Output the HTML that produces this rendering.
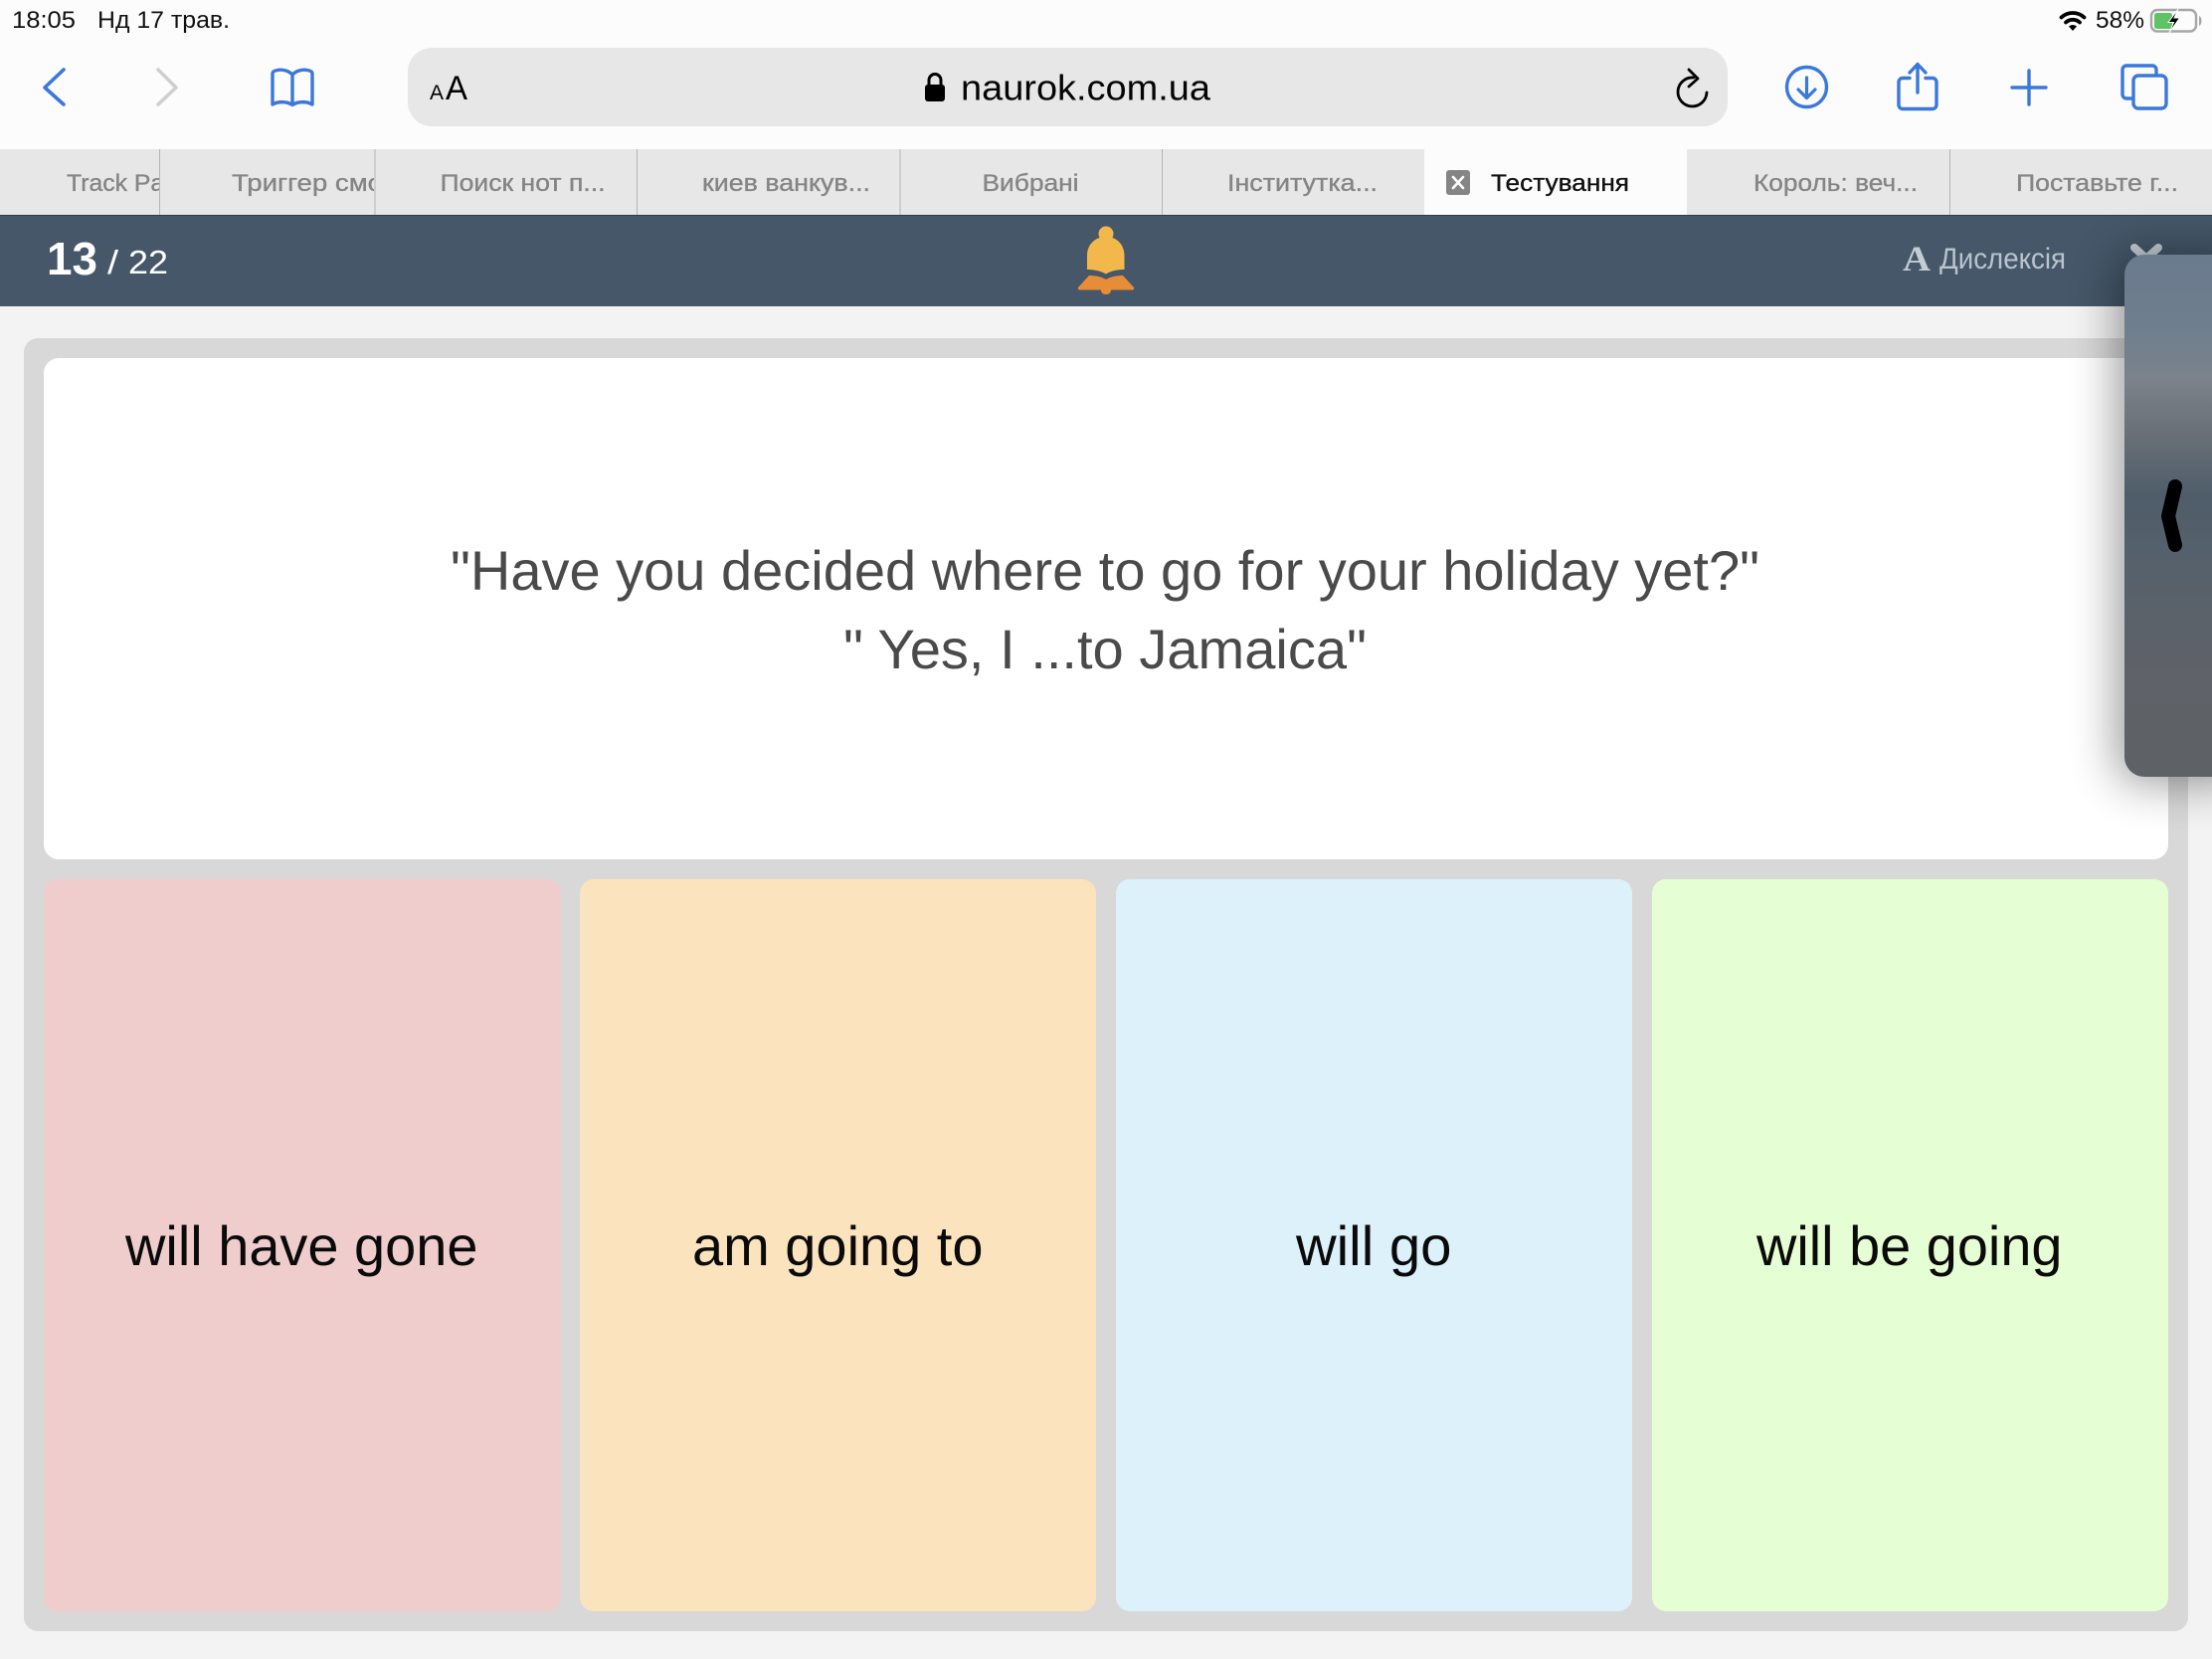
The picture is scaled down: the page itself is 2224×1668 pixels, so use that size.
<!DOCTYPE html>
<html lang="uk">
<head>
<meta charset="utf-8">
<title>Тестування</title>
<style>
html,body{margin:0;padding:0;width:2224px;height:1668px;overflow:hidden;background:#f3f3f3}
svg{display:block}
text{font-family:"Liberation Sans","DejaVu Sans",sans-serif}
.tab{font-size:24px;fill:#858585;stroke:#858585;stroke-width:.35px}
.ans{font-size:56px;fill:#0a0a0a}
.q{font-size:56px;fill:#4a4a4a}
</style>
</head>
<body>
<svg width="2224" height="1668" viewBox="0 0 2224 1668" xmlns="http://www.w3.org/2000/svg">
<defs>
<clipPath id="c1"><rect x="0" y="150" width="160" height="66"/></clipPath>
<clipPath id="c2"><rect x="161" y="150" width="215" height="66"/></clipPath>
<linearGradient id="ov" x1="0" y1="0" x2="0" y2="1">
<stop offset="0" stop-color="#6a7b8e"/>
<stop offset=".14" stop-color="#6f7e8e"/>
<stop offset=".24" stop-color="#7b828b"/>
<stop offset=".33" stop-color="#6c7278"/>
<stop offset=".46" stop-color="#4f5d6a"/>
<stop offset=".6" stop-color="#56616b"/>
<stop offset=".8" stop-color="#5f6268"/>
<stop offset="1" stop-color="#5e6266"/>
</linearGradient>
<filter id="sh" x="-50%" y="-20%" width="200%" height="140%"><feGaussianBlur stdDeviation="24"/></filter>
</defs>

<!-- page -->
<rect width="2224" height="1668" fill="#f3f3f3"/>

<!-- toolbar -->
<rect width="2224" height="150" fill="#fcfcfc"/>
<text x="12" y="28" font-size="24.5" fill="#111" textLength="64" lengthAdjust="spacingAndGlyphs">18:05</text>
<text x="98" y="28" font-size="24.5" fill="#111" textLength="133" lengthAdjust="spacingAndGlyphs">Нд 17 трав.</text>

<!-- status right -->
<path d="M2072.500 17.500a17 17 0 0 1 23 0M2077 22.500a10.500 10.500 0 0 1 14 0" fill="none" stroke="#000" stroke-width="3.800" stroke-linecap="round"/>
<path d="M2080 26.500a6 6 0 0 1 8 0L2084 31z" fill="#000"/>
<text x="2107" y="28" font-size="24.5" fill="#111" textLength="49" lengthAdjust="spacingAndGlyphs">58%</text>
<rect x="2163" y="10" width="45" height="21.500" rx="6" fill="none" stroke="#a6a6a6" stroke-width="2.400"/>
<rect x="2166" y="13" width="18" height="16" rx="2.500" fill="#5fc264"/>
<path d="M2211 16c1.500.5 2.500 2.500 2.500 5s-1 4.500-2.500 5z" fill="#a6a6a6"/>
<path d="M2190 9l-10 13.500h5.500L2181 33l10.500-15H2186l4-9z" fill="#000" stroke="#fcfcfc" stroke-width="1"/>

<!-- nav icons -->
<path d="M64 70L45 88l19 17" fill="none" stroke="#3a78dc" stroke-width="3.600" stroke-linecap="round" stroke-linejoin="round"/>
<path d="M159 70l18 18-18 17" fill="none" stroke="#cfcfcf" stroke-width="3.600" stroke-linecap="round" stroke-linejoin="round"/>
<path d="M294 75c-4-4-10-5.500-15-4.500-3 .5-5 1.500-5 3.500v31c5-3 14-3.500 20 .5 6-4 15-3.500 20-.5V74c0-2-2-3-5-3.500-5-1-11 .5-15 4.500zM294 75v31" fill="none" stroke="#3a78dc" stroke-width="3.400" stroke-linejoin="round"/>

<!-- url bar -->
<rect x="410" y="48" width="1327" height="79" rx="24" fill="#e7e7e7"/>
<text x="432" y="100" font-size="21" fill="#000" textLength="14" lengthAdjust="spacingAndGlyphs">A</text>
<text x="448" y="100" font-size="34" fill="#000" textLength="22" lengthAdjust="spacingAndGlyphs">A</text>
<rect x="930" y="85" width="20" height="17" rx="3" fill="#000"/>
<path d="M934 86v-5.500a6 6 0 0 1 12 0V86" fill="none" stroke="#000" stroke-width="3"/>
<text x="966" y="100.500" font-size="36" fill="#050505" textLength="251" lengthAdjust="spacingAndGlyphs">naurok.com.ua</text>
<path d="M1703 78a14.500 14.500 0 1 0 13 15" fill="none" stroke="#000" stroke-width="2.800" stroke-linecap="round"/>
<path d="M1698 70l9 9-9 8" fill="none" stroke="#000" stroke-width="2.800" stroke-linecap="round" stroke-linejoin="round"/>

<!-- right icons -->
<circle cx="1816.500" cy="87.500" r="20" fill="none" stroke="#3a78dc" stroke-width="3.400"/>
<path d="M1816.500 78v20M1808 90l8.500 8.500 8.500-8.500" fill="none" stroke="#3a78dc" stroke-width="3.200" stroke-linecap="round" stroke-linejoin="round"/>
<path d="M1920 78.500h-7a4 4 0 0 0-4 4v23a4 4 0 0 0 4 4h30a4 4 0 0 0 4-4v-23a4 4 0 0 0-4-4h-7" fill="none" stroke="#3a78dc" stroke-width="3.400" stroke-linecap="round"/>
<path d="M1928 65v28M1920 73l8-8.500 8 8.500" fill="none" stroke="#3a78dc" stroke-width="3.400" stroke-linecap="round" stroke-linejoin="round"/>
<path d="M2023 88h34M2040 71v34" fill="none" stroke="#3a78dc" stroke-width="3.400" stroke-linecap="round"/>
<path d="M2144 99h-6a4 4 0 0 1-4-4V70a4 4 0 0 1 4-4h26a4 4 0 0 1 4 4v6" fill="none" stroke="#3a78dc" stroke-width="3.400"/>
<rect x="2145" y="76" width="33" height="33" rx="5" fill="none" stroke="#3a78dc" stroke-width="3.400"/>

<!-- tabs -->
<rect x="0" y="150" width="1432" height="66" fill="#e7e7e7"/>
<rect x="1432" y="150" width="264" height="66" fill="#fcfcfc"/>
<rect x="1696" y="150" width="528" height="66" fill="#e7e7e7"/>
<g fill="#b4b4b4">
<rect x="160" y="150" width="1" height="66"/>
<rect x="376.500" y="150" width="1" height="66"/>
<rect x="640" y="150" width="1" height="66"/>
<rect x="904.500" y="150" width="1" height="66"/>
<rect x="1168" y="150" width="1" height="66"/>
<rect x="1960" y="150" width="1" height="66"/>
</g>
<text class="tab" x="67" y="192" clip-path="url(#c1)" textLength="112" lengthAdjust="spacingAndGlyphs">Track Pad</text>
<text class="tab" x="233" y="192" clip-path="url(#c2)" textLength="152" lengthAdjust="spacingAndGlyphs">Триггер смо</text>
<text class="tab" x="442.500" y="192" textLength="166" lengthAdjust="spacingAndGlyphs">Поиск нот п...</text>
<text class="tab" x="706" y="192" textLength="169" lengthAdjust="spacingAndGlyphs">киев ванкув...</text>
<text class="tab" x="987.500" y="192" textLength="97" lengthAdjust="spacingAndGlyphs">Вибрані</text>
<text class="tab" x="1234" y="192" textLength="151" lengthAdjust="spacingAndGlyphs">Інститутка...</text>
<rect x="1454" y="171" width="24" height="25" rx="3" fill="#858585"/>
<path d="M1461 178l10 11M1471 178l-10 11" stroke="#fff" stroke-width="2.600" stroke-linecap="round"/>
<text x="1499" y="192" font-size="24" fill="#111" stroke="#111" stroke-width=".35" textLength="139" lengthAdjust="spacingAndGlyphs">Тестування</text>
<text class="tab" x="1763" y="192" textLength="165" lengthAdjust="spacingAndGlyphs">Король: веч...</text>
<text class="tab" x="2027" y="192" textLength="163" lengthAdjust="spacingAndGlyphs">Поставьте г...</text>

<!-- header -->
<rect x="0" y="216" width="2224" height="92" fill="#455769"/>
<rect x="0" y="216" width="2224" height="1" fill="#2c3c4e"/>
<text x="47" y="276" font-size="46" font-weight="700" fill="#fff" textLength="51" lengthAdjust="spacingAndGlyphs">13</text>
<text x="108" y="275" font-size="33" fill="#fff" textLength="11" lengthAdjust="spacingAndGlyphs">/</text>
<text x="129" y="275" font-size="33" fill="#fff" textLength="40" lengthAdjust="spacingAndGlyphs">22</text>

<!-- bell -->
<circle cx="1112" cy="235" r="7.500" fill="#f2b84c"/>
<path d="M1093 271v-14c0-11 8-19 19-19s18.500 8 18.500 19v14c-6 0-13 1-18.500 4.500-6-3.500-13-4.500-19-4.500z" fill="#f2b84c"/>
<path d="M1095 277c6 0 12 1 17 4 5-3 11-4 17-4l11 12c.5 1 0 2.500-1.500 2.500H1117c0 3-2 4.500-5 4.500s-5-1.500-5-4.500h-21.500c-1.500 0-2-1.500-1.500-2.500z" fill="#e78d37"/>

<!-- dyslexia -->
<text x="1913" y="272" font-size="36" font-weight="700" fill="#c3ccd4" style="font-family:'Liberation Serif',serif" textLength="28" lengthAdjust="spacingAndGlyphs">A</text>
<text x="1950" y="270" font-size="30" fill="#b9c4cd" textLength="127" lengthAdjust="spacingAndGlyphs">Дислексія</text>
<path d="M2146 249l24 22M2170 249l-24 22" stroke="#c5ced6" stroke-width="8" stroke-linecap="round"/>

<!-- main panel -->
<rect x="24" y="340" width="2176" height="1300" rx="14" fill="#d8d8d8"/>
<rect x="44" y="360" width="2136" height="504" rx="15" fill="#ffffff"/>
<text class="q" x="453" y="593" textLength="1316" lengthAdjust="spacingAndGlyphs">"Have you decided where to go for your holiday yet?"</text>
<text class="q" x="848" y="672" textLength="526" lengthAdjust="spacingAndGlyphs">" Yes, I ...to Jamaica"</text>

<!-- answers -->
<rect x="44" y="884" width="520" height="736" rx="14" fill="#f0cdcd"/>
<rect x="583" y="884" width="519" height="736" rx="14" fill="#fae3bd"/>
<rect x="1122" y="884" width="519" height="736" rx="14" fill="#ddf1fb"/>
<rect x="1661" y="884" width="519" height="736" rx="14" fill="#e6fed3"/>
<text class="ans" x="126" y="1272" textLength="354.500" lengthAdjust="spacingAndGlyphs">will have gone</text>
<text class="ans" x="696" y="1272" textLength="292.500" lengthAdjust="spacingAndGlyphs">am going to</text>
<text class="ans" x="1303" y="1272" textLength="156.500" lengthAdjust="spacingAndGlyphs">will go</text>
<text class="ans" x="1766" y="1272" textLength="307.500" lengthAdjust="spacingAndGlyphs">will be going</text>

<!-- slide-over handle -->
<rect x="2130" y="256" width="130" height="530" rx="20" fill="#000" opacity=".42" filter="url(#sh)"/>
<path d="M2136 276a20 20 0 0 1 20-20h68v525h-68a20 20 0 0 1-20-20z" fill="url(#ov)"/>
<path d="M2187 489L2180 519L2187 548" fill="none" stroke="#000" stroke-width="14" stroke-linecap="round" stroke-linejoin="round"/>
</svg>
</body>
</html>
